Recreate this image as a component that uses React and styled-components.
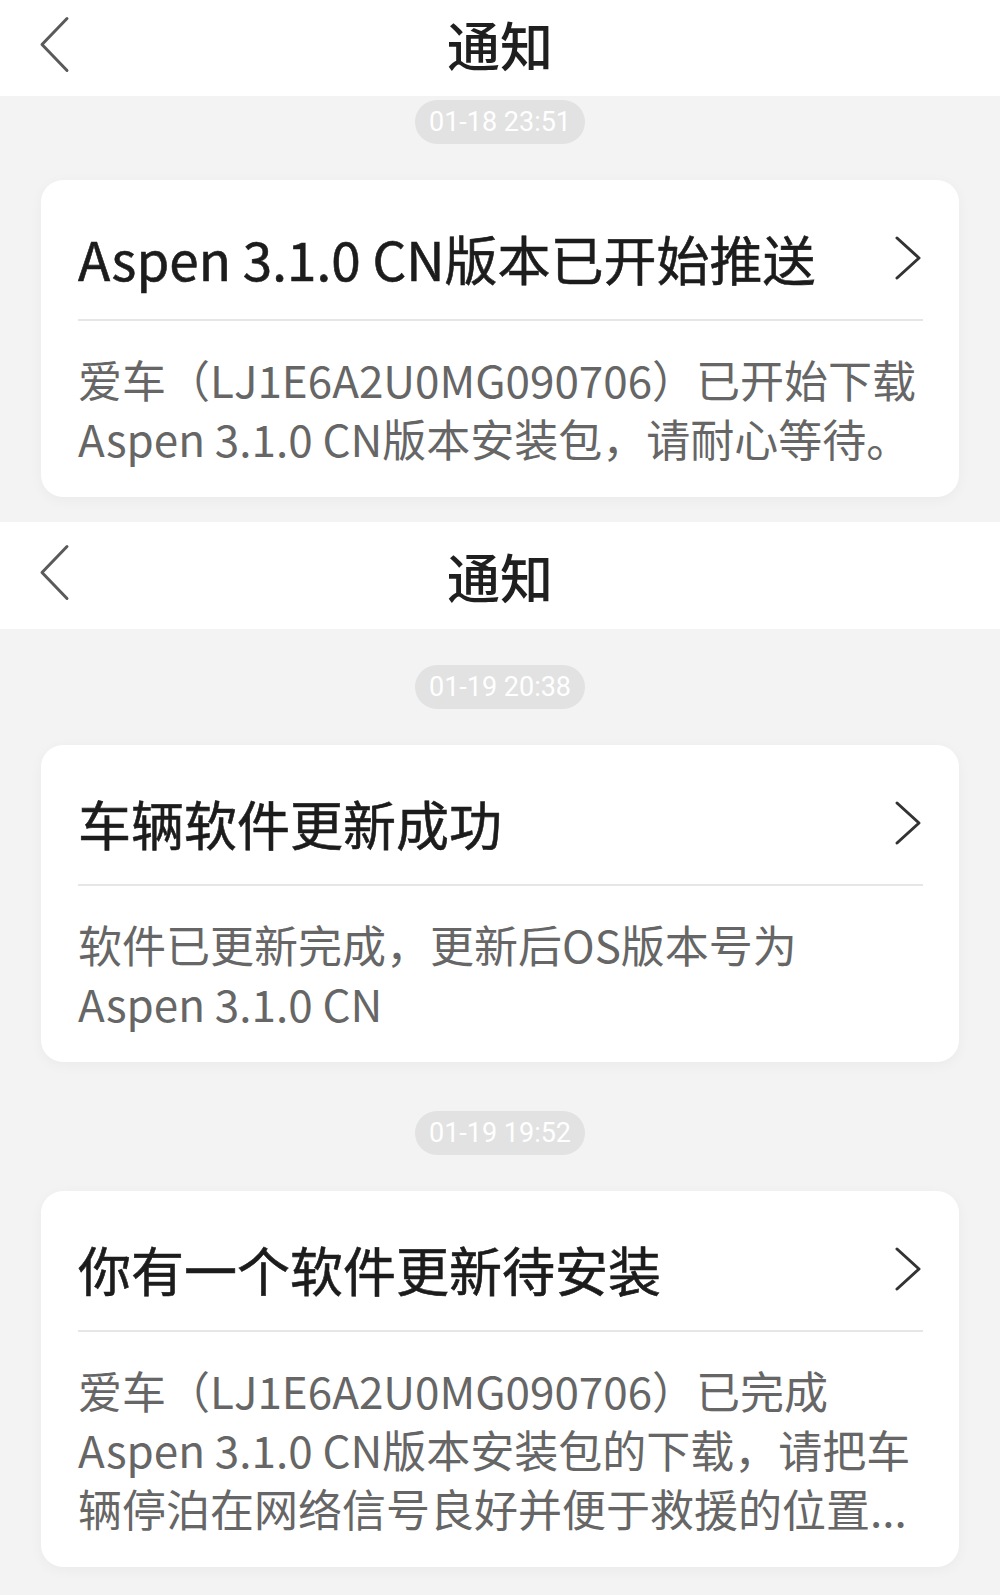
import styled, { createGlobalStyle } from "styled-components";

const GlobalStyle = createGlobalStyle`
  * { box-sizing: border-box; }
  html, body {
    margin: 0;
    padding: 0;
    background: #f3f3f3;
    font-family: "Noto Sans CJK SC", "Noto Sans", sans-serif;
  }
`;

const screens = [
  {
    cropped: true,
    items: [
      {
        time: "01-18 23:51",
        title: "Aspen 3.1.0 CN版本已开始推送",
        lines: ["爱车（LJ1E6A2U0MG090706）已开始下载", "Aspen 3.1.0 CN版本安装包，请耐心等待。"],
      },
    ],
  },
  {
    cropped: false,
    items: [
      {
        time: "01-19 20:38",
        title: "车辆软件更新成功",
        lines: ["软件已更新完成，更新后OS版本号为", "Aspen 3.1.0 CN"],
      },
      {
        time: "01-19 19:52",
        title: "你有一个软件更新待安装",
        lines: [
          "爱车（LJ1E6A2U0MG090706）已完成",
          "Aspen 3.1.0 CN版本安装包的下载，请把车",
          "辆停泊在网络信号良好并便于救援的位置...",
        ],
      },
    ],
  },
];

function BackIcon() {
  return (
    <svg width="34" height="58" viewBox="0 0 34 58" fill="none">
      <polyline points="30,3 5,29 30,55" stroke="#5a5a5a" strokeWidth="3" strokeLinecap="round" strokeLinejoin="round" />
    </svg>
  );
}

function ArrowIcon() {
  return (
    <svg width="30" height="46" viewBox="0 0 30 46" fill="none">
      <polyline points="4,3 26,23 4,43" stroke="#333" strokeWidth="3" strokeLinecap="round" strokeLinejoin="round" />
    </svg>
  );
}

export default function App() {
  return (
    <Page>
      <GlobalStyle />
      {screens.map((screen, i) => (
        <Screen key={i}>
          <Header $cropped={screen.cropped}>
            <BackButton>
              <BackIcon />
            </BackButton>
            <HeaderTitle>通知</HeaderTitle>
          </Header>
          <Feed $cropped={screen.cropped}>
            {screen.items.map((item, j) => (
              <Entry key={j} $last={j === screen.items.length - 1}>
                <TimePill>{item.time}</TimePill>
                <Card>
                  <TitleRow>
                    <CardTitle>{item.title}</CardTitle>
                    <ArrowIcon />
                  </TitleRow>
                  <Divider />
                  <Body>
                    {item.lines.map((line, k) => (
                      <BodyLine key={k}>{line}</BodyLine>
                    ))}
                  </Body>
                </Card>
              </Entry>
            ))}
          </Feed>
        </Screen>
      ))}
    </Page>
  );
}

const Page = styled.div`
  width: 1000px;
  min-height: 1595px;
  background: #f3f3f3;
`;

const Screen = styled.section`
  display: flex;
  flex-direction: column;
`;

const Header = styled.header`
  position: relative;
  height: ${(p) => (p.$cropped ? "96px" : "107px")};
  padding-bottom: ${(p) => (p.$cropped ? "8px" : "0")};
  background: #ffffff;
  display: flex;
  align-items: center;
  justify-content: center;
`;

const BackButton = styled.div`
  position: absolute;
  left: 37px;
  top: 50%;
  transform: translateY(-56%);
  display: flex;
`;

const HeaderTitle = styled.h1`
  margin: 0;
  font-size: 53px;
  font-weight: 500;
  color: #1f1f1f;
`;

const Feed = styled.div`
  display: flex;
  flex-direction: column;
  align-items: center;
  padding: ${(p) => (p.$cropped ? "4px 41px 25px" : "36px 41px 28px")};
`;

const Entry = styled.div`
  width: 100%;
  display: flex;
  flex-direction: column;
  align-items: center;
  margin-bottom: ${(p) => (p.$last ? "0" : "49px")};
`;

const TimePill = styled.div`
  height: 44px;
  padding: 0 14px;
  min-width: 167px;
  border-radius: 22px;
  background: #e2e2e2;
  color: #ffffff;
  font-family: "Roboto", "Noto Sans", sans-serif;
  font-size: 27px;
  line-height: 44px;
  text-align: center;
  margin-bottom: 36px;
`;

const Card = styled.div`
  width: 100%;
  background: #ffffff;
  border-radius: 22px;
  box-shadow: 0 3px 14px rgba(0, 0, 0, 0.04);
  padding: 48px 36px 29px 37px;
`;

const TitleRow = styled.div`
  height: 60px;
  display: flex;
  align-items: center;
  justify-content: space-between;
`;

const CardTitle = styled.div`
  font-size: 53px;
  line-height: 60px;
  font-weight: 400;
  color: #1c1c1c;
  -webkit-text-stroke: 0.6px #1c1c1c;
  white-space: nowrap;
`;

const Divider = styled.div`
  height: 2px;
  background: #e6e6e6;
  margin: 31px 0 29px;
`;

const Body = styled.div`
  display: flex;
  flex-direction: column;
`;

const BodyLine = styled.div`
  font-size: 44px;
  line-height: 59px;
  color: #666666;
  white-space: nowrap;
`;
